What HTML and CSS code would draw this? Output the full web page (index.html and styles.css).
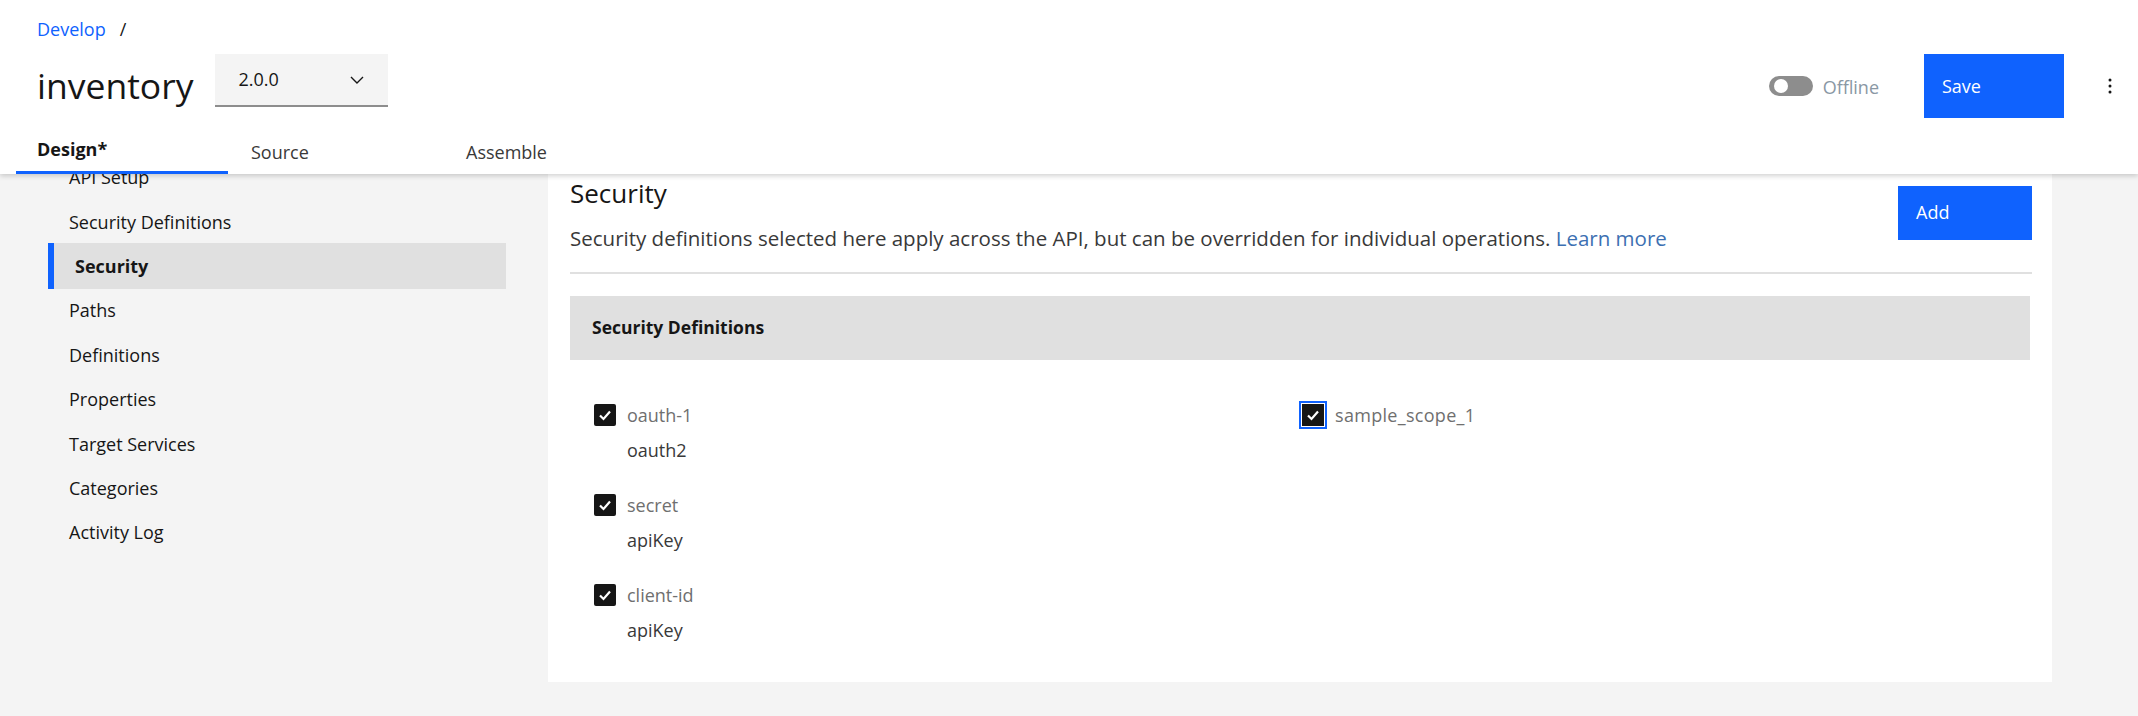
FILE: index.html
```html
<!DOCTYPE html>
<html lang="en">
<head>
<meta charset="utf-8">
<title>inventory - Design</title>
<link rel="stylesheet" href="styles.css">
</head>
<body>
<header class="app-header">
  <div class="header-top">
    <div class="title-block">
      <nav class="breadcrumb"><a class="crumb-link">Develop</a><span class="crumb-sep">/</span></nav>
      <div class="title-row">
        <h1 class="api-title">inventory</h1>
        <div class="version-select">
          <span class="version-value">2.0.0</span>
          <svg class="chevron" width="14" height="8" viewBox="0 0 14 8"><path d="M1 1 L7 7 L13 1" fill="none" stroke="#161616" stroke-width="1.4"/></svg>
        </div>
      </div>
    </div>
    <div class="header-actions">
      <div class="toggle"><span class="toggle-knob"></span></div>
      <span class="toggle-label">Offline</span>
      <button class="btn-primary btn-save">Save</button>
      <button class="overflow-btn" aria-label="More">
        <svg width="4" height="16" viewBox="0 0 4 16"><circle cx="2" cy="2" r="1.5" fill="#161616"/><circle cx="2" cy="8" r="1.5" fill="#161616"/><circle cx="2" cy="14" r="1.5" fill="#161616"/></svg>
      </button>
    </div>
  </div>
  <div class="tabs">
    <div class="tab tab-active">Design*</div>
    <div class="tab">Source</div>
    <div class="tab">Assemble</div>
  </div>
</header>
<main class="workspace">
  <aside class="sidenav">
    <ul class="nav-list">
      <li class="nav-item">API Setup</li>
      <li class="nav-item">Security Definitions</li>
      <li class="nav-item nav-item-active">Security</li>
      <li class="nav-item">Paths</li>
      <li class="nav-item">Definitions</li>
      <li class="nav-item">Properties</li>
      <li class="nav-item">Target Services</li>
      <li class="nav-item">Categories</li>
      <li class="nav-item">Activity Log</li>
    </ul>
  </aside>
  <section class="panel">
    <div class="panel-head">
      <div class="panel-intro">
        <h2 class="panel-title">Security</h2>
        <p class="panel-desc">Security definitions selected here apply across the API, but can be overridden for individual operations. <a class="link">Learn more</a></p>
      </div>
      <button class="btn-primary btn-add">Add</button>
    </div>
    <div class="section-bar">Security Definitions</div>
    <div class="def-grid">
      <ul class="def-list">
        <li class="def-item">
          <div class="check-row">
            <span class="checkbox"><svg width="22" height="22" viewBox="0 0 22 22"><path d="M6 11.5 L9.5 15 L16 7.5" fill="none" stroke="#fff" stroke-width="2.2"/></svg></span>
            <span class="check-label">oauth-1</span>
          </div>
          <div class="def-type">oauth2</div>
        </li>
        <li class="def-item">
          <div class="check-row">
            <span class="checkbox"><svg width="22" height="22" viewBox="0 0 22 22"><path d="M6 11.5 L9.5 15 L16 7.5" fill="none" stroke="#fff" stroke-width="2.2"/></svg></span>
            <span class="check-label">secret</span>
          </div>
          <div class="def-type">apiKey</div>
        </li>
        <li class="def-item">
          <div class="check-row">
            <span class="checkbox"><svg width="22" height="22" viewBox="0 0 22 22"><path d="M6 11.5 L9.5 15 L16 7.5" fill="none" stroke="#fff" stroke-width="2.2"/></svg></span>
            <span class="check-label">client-id</span>
          </div>
          <div class="def-type">apiKey</div>
        </li>
      </ul>
      <ul class="scope-list">
        <li class="def-item">
          <div class="check-row">
            <span class="checkbox checkbox-focus"><svg width="22" height="22" viewBox="0 0 22 22"><path d="M6 11.5 L9.5 15 L16 7.5" fill="none" stroke="#fff" stroke-width="2.2"/></svg></span>
            <span class="check-label check-label-wide">sample_scope_1</span>
          </div>
        </li>
      </ul>
    </div>
  </section>
</main>
</body>
</html>
```

FILE: styles.css
```css
* { box-sizing: border-box; }

html, body {
  margin: 0;
  padding: 0;
}

body {
  width: 2138px;
  height: 716px;
  overflow: hidden;
  background: #f4f4f4;
  font-family: "Open Sans", "Noto Sans", sans-serif;
  font-size: 18px;
  color: #161616;
}

ul { list-style: none; margin: 0; padding: 0; }
h1, h2, p { margin: 0; }
button { font-family: inherit; border: 0; cursor: pointer; }

/* ---------- header ---------- */
.app-header {
  position: relative;
  z-index: 2;
  height: 174px;
  background: #fff;
  box-shadow: 0 2px 5px rgba(0, 0, 0, 0.18);
  display: flex;
  flex-direction: column;
}

.header-top {
  display: flex;
  justify-content: space-between;
  align-items: flex-start;
  padding-left: 37px;
  padding-right: 4px;
}

.breadcrumb {
  padding-top: 16px;
  height: 42px;
  line-height: 26px;
  display: flex;
  gap: 14px;
}

.crumb-link { color: #0f62fe; }
.crumb-sep { color: #161616; }

.title-row {
  margin-top: 12px;
  display: flex;
  align-items: flex-start;
  gap: 22px;
}

.api-title {
  font-size: 35.5px;
  font-weight: 400;
  line-height: 53px;
  padding-top: 5px;
  color: #161616;
}

.version-select {
  width: 173px;
  height: 53px;
  background: #f4f4f4;
  border-bottom: 2px solid #8d8d8d;
  display: flex;
  align-items: center;
  justify-content: space-between;
  padding: 0 24px 2px 23px;
  font-size: 18px;
  color: #161616;
}

.chevron { display: block; margin-top: 2px; }

.header-actions {
  margin-top: 54px;
  height: 64px;
  display: flex;
  align-items: center;
}

.toggle {
  width: 44px;
  height: 20px;
  border-radius: 10px;
  background: #8d8d8d;
  display: flex;
  align-items: center;
  padding-left: 5px;
}

.toggle-knob {
  width: 14px;
  height: 14px;
  border-radius: 50%;
  background: #fff;
}

.toggle-label {
  margin-left: 10px;
  color: #8a98a4;
  font-size: 18px;
  line-height: 24px;
  padding-top: 2px;
}

.btn-primary {
  background: #0f62fe;
  color: #fff;
  font-size: 18px;
  text-align: left;
  padding: 0 0 0 18px;
}

.btn-save {
  margin-left: 45px;
  width: 140px;
  height: 64px;
}

.overflow-btn {
  margin-left: 22px;
  width: 48px;
  height: 48px;
  background: transparent;
  display: flex;
  align-items: center;
  justify-content: center;
}

.overflow-btn svg { display: block; }

.tabs {
  margin-top: auto;
  margin-left: 16px;
  display: flex;
  width: 642px;
  background: #fff;
}

.tab {
  width: 212px;
  height: 46px;
  padding-left: 21px;
  padding-top: 10px;
  line-height: 28px;
  font-size: 18px;
  color: #393939;
  border-bottom: 2px solid transparent;
}

.tab + .tab { padding-left: 23px; }
.tab:nth-child(3) { padding-left: 26px; }

.tab-active {
  font-weight: 700;
  color: #161616;
  padding-top: 7px;
  border-bottom: 3px solid #0f62fe;
}

/* ---------- workspace ---------- */
.workspace {
  position: relative;
  z-index: 1;
  margin-top: -19px;
  display: flex;
  align-items: flex-start;
}

.sidenav {
  width: 548px;
  flex: none;
  padding: 0 42px 0 48px;
}

.nav-item {
  height: 44.4px;
  display: flex;
  align-items: center;
  padding-left: 21px;
  font-size: 18px;
  color: #161616;
}

.nav-item-active {
  background: #e0e0e0;
  border-left: 6px solid #0f62fe;
  font-weight: 700;
  height: 46px;
  margin-top: -0.8px;
  margin-bottom: -0.8px;
}

.panel {
  width: 1504px;
  flex: none;
  background: #fff;
  padding: 21px 20px 40px 22px;
}

.panel-head {
  display: flex;
  justify-content: space-between;
  align-items: flex-start;
  padding-bottom: 21px;
  border-bottom: 2px solid #e0e0e0;
}

.panel-title {
  font-size: 26px;
  font-weight: 400;
  line-height: 34px;
  color: #161616;
}

.panel-desc {
  margin-top: 15px;
  font-size: 20.5px;
  line-height: 26px;
  color: #393939;
}

.link { color: #3d70b2; }

.btn-add {
  margin-top: 10px;
  width: 134px;
  height: 54px;
  padding-bottom: 2px;
}

.section-bar {
  margin-top: 22px;
  margin-right: 2px;
  height: 64px;
  background: #e0e0e0;
  display: flex;
  align-items: center;
  padding-left: 22px;
  padding-bottom: 3px;
  font-weight: 700;
  font-size: 17.5px;
  color: #161616;
}

.def-grid {
  padding-top: 44px;
  display: grid;
  grid-template-columns: 730px 1fr;
}

.def-list { padding-left: 24px; }
.scope-list { padding-left: 2px; }

.def-item + .def-item { margin-top: 32px; }

.check-row {
  display: flex;
  align-items: center;
  gap: 11px;
  height: 22px;
}

.checkbox {
  width: 22px;
  height: 22px;
  border-radius: 2px;
  background: #161616;
  flex: none;
}

.checkbox svg { display: block; }

.checkbox-focus {
  outline: 2px solid #0f62fe;
  outline-offset: 1px;
  border-radius: 0;
}

.check-label {
  font-size: 18px;
  line-height: 22px;
  color: #6f6f6f;
}

.check-label-wide { letter-spacing: 0.3px; }

.def-type {
  margin-top: 12px;
  padding-left: 33px;
  font-size: 18px;
  line-height: 24px;
  color: #393939;
}
```
